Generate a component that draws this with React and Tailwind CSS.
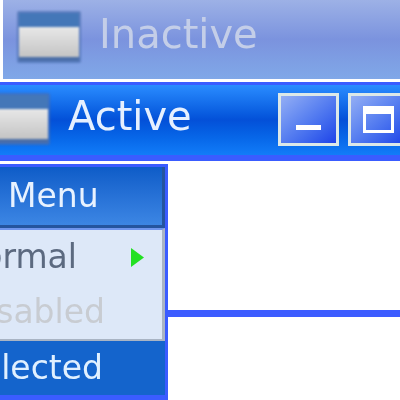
const font = { fontFamily: '"DejaVu Sans", sans-serif' };

function WinIcon({ className }) {
  return (
    <div className={"flex flex-col w-[64px] h-[52px] shrink-0 border-2 border-[#4a6fb0]/70 rounded-[2px] blur-[1px] " + className}>
      <div className="h-[14px] bg-[#4477b8]" />
      <div className="flex-1 bg-gradient-to-b from-[#e8e8e8] to-[#c4c4c4]" />
      <div className="h-[4px] bg-[#4a6ea8]" />
    </div>
  );
}

function Row({ className, children }) {
  return <div className={"flex items-center justify-end whitespace-nowrap " + className}>{children}</div>;
}

export default function App() {
  return (
    <div className="w-[400px] h-[400px] bg-white overflow-hidden" style={font}>
      <div className="ml-[3px] h-[79px] flex items-start bg-gradient-to-b from-[#9db1e6] via-[#7b93de] to-[#80a8e8]">
        <WinIcon className="ml-[14px] mt-[11px]" />
        <span className="ml-[18px] mt-[11px] text-[40px] leading-[46px] text-[#c4cee8] blur-[0.7px] whitespace-nowrap">Inactive</span>
      </div>
      <div className="h-[3px] ml-[12px] bg-white" />
      <div className="h-[79px] flex items-start border-t-[3px] border-b-[6px] border-[#3a5cff] bg-gradient-to-b from-[#2a8cff] via-[#0450d8] to-[#127cf8]">
        <WinIcon className="-ml-[14px] mt-[8px]" />
        <span className="ml-[18px] mt-[8px] w-[125px] shrink-0 text-[40px] leading-[46px] text-[#e6f0ff] blur-[0.6px] whitespace-nowrap">Active</span>
        <button className="ml-[85px] mt-[8px] w-[61px] h-[53px] shrink-0 flex items-end justify-center border-[3px] border-[#dce8e8] bg-gradient-to-br from-[#94aef4] to-[#2040e8]">
          <span className="mb-[13px] w-[25px] h-[5px] bg-white" />
        </button>
        <button className="ml-[9px] mt-[8px] w-[61px] h-[53px] shrink-0 flex items-center justify-center border-[3px] border-[#dce8e8] bg-gradient-to-br from-[#94aef4] to-[#2040e8]">
          <span className="w-[31px] h-[27px] border-[3px] border-t-[8px] border-white" />
        </button>
      </div>
      <div className="h-[3px] bg-white" />
      <div className="relative">
        <div className="absolute left-[167px] right-0 top-[146px] h-[7px] bg-[#3c5cff]" />
        <div className="w-[168px] h-[236px] flex flex-col border-[3px] border-l-0 border-b-[5px] border-[#3a5cff]">
          <Row className="h-[61px] justify-start bg-gradient-to-b from-[#0d5cc8] to-[#3c86e4] border-r-[3px] border-b-[3px] border-[#24559f]">
            <span className="ml-[8px] text-[33px] leading-[38px] text-[#e8f2ff] blur-[0.6px]">Menu</span>
          </Row>
          <div className="h-[113px] flex flex-col bg-[#dde8f8] border-t-[2px] border-b-[2px] border-r-[3px] border-t-[#6f96ee] border-b-[#a9b4c4] border-r-[#a9b4c4]">
            <Row className="h-[54px]">
              <span className="text-[33px] leading-[38px] text-[#5c6a80] blur-[0.6px]">ormal</span>
              <svg className="ml-[54px] mr-[18px] shrink-0" width="13" height="19" viewBox="0 0 13 19"><path d="M0 0 L13 9.5 L0 19 Z" fill="#22e022" /></svg>
            </Row>
            <Row className="flex-1 pr-[57px]">
              <span className="text-[33px] leading-[38px] text-[#c8ccd2] blur-[0.6px]">Disabled</span>
            </Row>
          </div>
          <Row className="flex-1 pr-[62px] bg-[#1464cc]">
            <span className="text-[33px] leading-[38px] text-[#e0f0ff] blur-[0.6px]">Selected</span>
          </Row>
        </div>
      </div>
    </div>
  );
}
